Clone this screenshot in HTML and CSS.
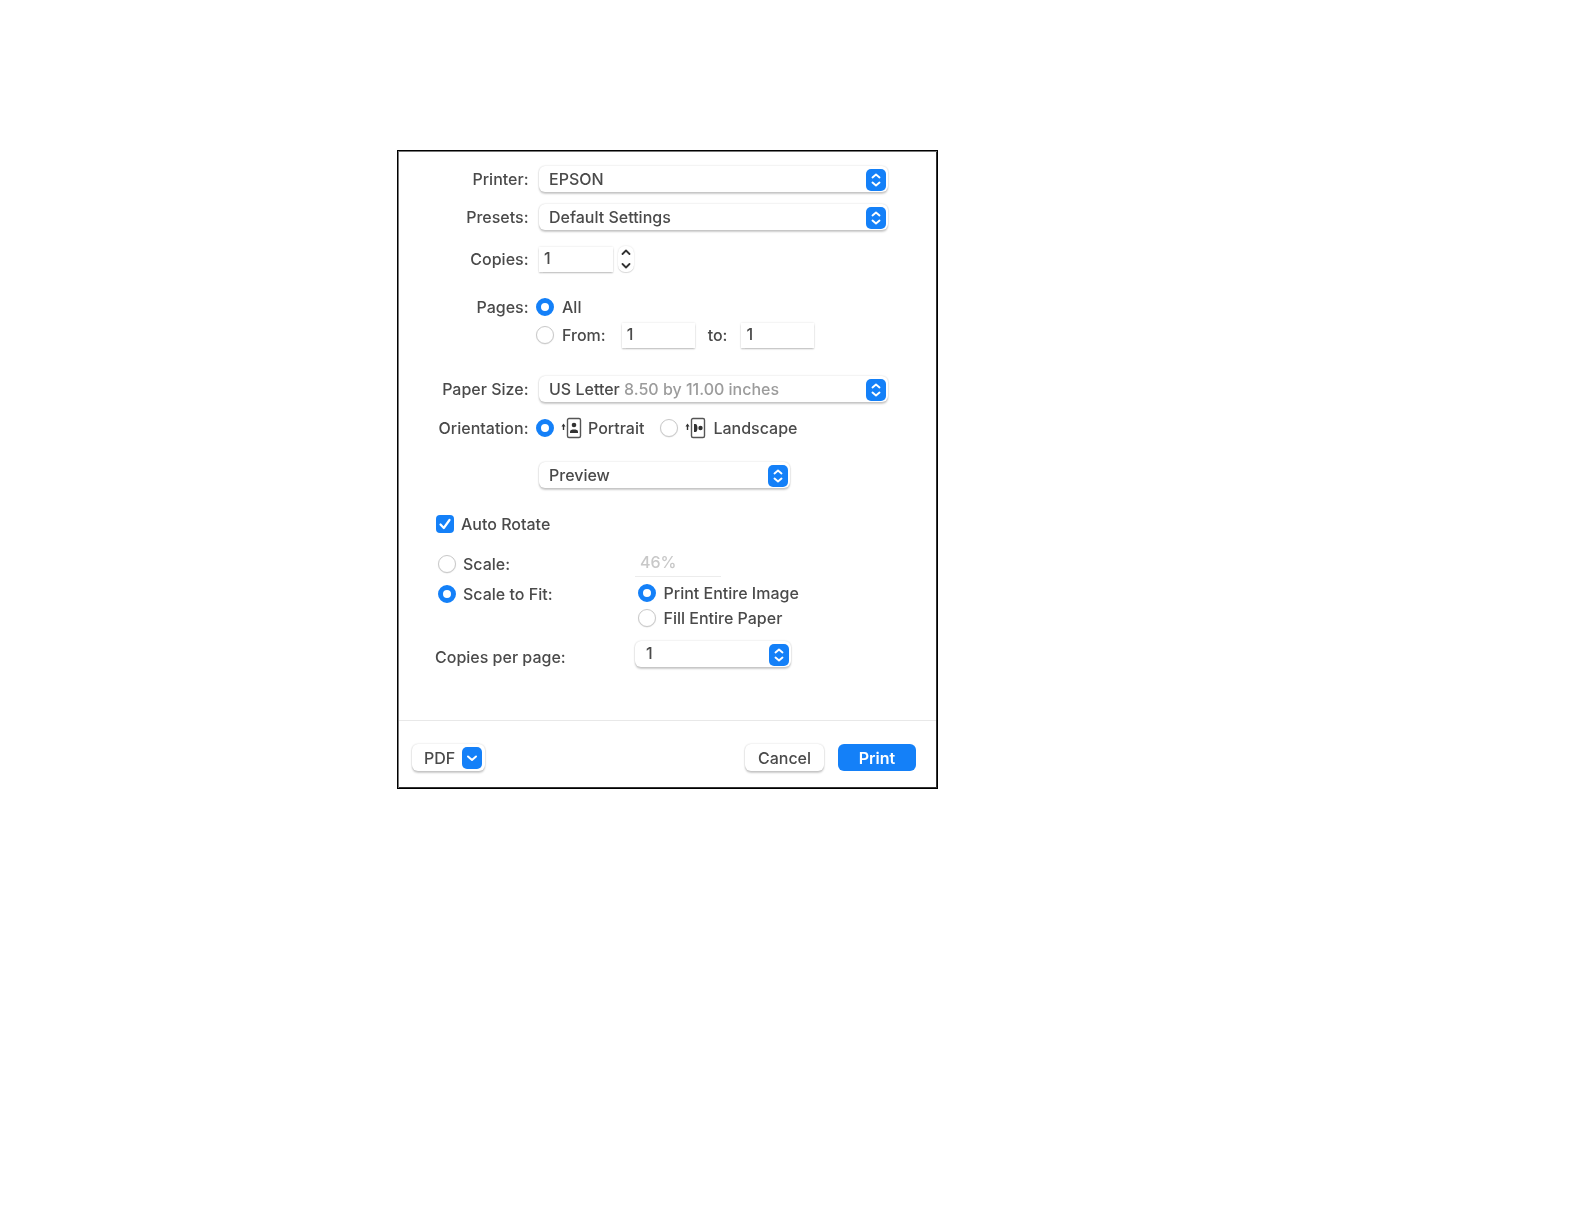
FILE: index.html
```html
<!DOCTYPE html>
<html lang="en">
<head>
<meta charset="utf-8">
<title>Print</title>
<link rel="stylesheet" href="styles.css">
</head>
<body>
<svg class="defs" width="0" height="0" aria-hidden="true">
  <symbol id="updown" viewBox="0 0 20 22"><path d="M6.500 8.500 10 5.500l3.500 3M6.500 13.500 10 16.500l3.500-3" fill="none" stroke="#fff" stroke-width="1.900" stroke-linecap="round" stroke-linejoin="round"/></symbol>
</svg>
<main class="dialog">
  <section class="form">
    <div class="row"><span class="label">Printer:</span>
      <div class="select wide"><span class="value">EPSON</span><span class="caret"><svg><use href="#updown"/></svg></span></div></div>
    <div class="row m12"><span class="label">Presets:</span>
      <div class="select wide"><span class="value">Default Settings</span><span class="caret"><svg><use href="#updown"/></svg></span></div></div>
    <div class="row m16"><span class="label">Copies:</span>
      <div class="field copies">1</div>
      <div class="stepper"><svg viewBox="0 0 16 26" width="16" height="26"><path d="M4.500 8 8 4.500 11.500 8M4.500 18 8 21.500 11.500 18" fill="none" stroke="#333" stroke-width="1.800" stroke-linecap="round" stroke-linejoin="round"/></svg></div></div>
    <div class="row m22"><span class="label">Pages:</span>
      <span class="radio on"></span><span class="opt">All</span></div>
    <div class="row m2"><span class="label"></span>
      <span class="radio"></span><span class="opt">From:</span>
      <div class="field range from">1</div><span class="to">to:</span><div class="field range">1</div></div>
    <div class="row m28"><span class="label">Paper Size:</span>
      <div class="select wide"><span class="value">US Letter <span class="dim">8.50 by 11.00 inches</span></span><span class="caret"><svg><use href="#updown"/></svg></span></div></div>
    <div class="row m13"><span class="label">Orientation:</span>
      <span class="radio on"></span>
      <svg class="orient" viewBox="0 0 28 22" width="28" height="22"><path d="M5.500 13V8" stroke="#333" stroke-width="1.400" fill="none"/><path d="M3.500 9.500h4L5.500 6.500z" fill="#333"/><rect x="9.500" y="1.500" width="13" height="19" rx="1.500" fill="#fff" stroke="#555" stroke-width="1.400"/><circle cx="16" cy="8" r="2.300" fill="#333"/><path d="M12 16v-1.500c0-2.600 8-2.600 8 0V16z" fill="#333"/></svg>
      <span class="opt">Portrait</span>
      <span class="radio second"></span>
      <svg class="orient" viewBox="0 0 28 22" width="28" height="22"><path d="M5.500 13V8" stroke="#333" stroke-width="1.400" fill="none"/><path d="M3.500 9.500h4L5.500 6.500z" fill="#333"/><rect x="9.500" y="1.500" width="13" height="19" rx="1.500" fill="#fff" stroke="#555" stroke-width="1.400"/><path d="M12 7h1.500c2.600 0 2.600 8 0 8H12z" fill="#333"/><circle cx="18.500" cy="11" r="2.200" fill="#333"/></svg>
      <span class="opt">Landscape</span></div>
    <div class="row m21"><span class="label"></span>
      <div class="select mid"><span class="value">Preview</span><span class="caret"><svg><use href="#updown"/></svg></span></div></div>
    <div class="lower">
      <div class="row"><span class="check"><svg viewBox="0 0 18 18" width="18" height="18"><path d="M4.500 9.500 7.800 13l5.700-8" fill="none" stroke="#fff" stroke-width="2.200" stroke-linecap="round" stroke-linejoin="round"/></svg></span><span class="opt">Auto Rotate</span></div>
      <div class="scale-grid">
        <div class="cell indent"><span class="radio"></span><span class="opt">Scale:</span></div>
        <div class="cell"><div class="percent">46%</div></div>
        <div class="cell indent top"><span class="radio on"></span><span class="opt">Scale to Fit:</span></div>
        <div class="stack">
          <div class="cell short"><span class="radio on"></span><span class="opt">Print Entire Image</span></div>
          <div class="cell short"><span class="radio"></span><span class="opt">Fill Entire Paper</span></div>
        </div>
        <div class="cell per"><span>Copies per page:</span></div>
        <div class="cell per-select"><div class="select small"><span class="value">1</span><span class="caret"><svg><use href="#updown"/></svg></span></div></div>
      </div>
    </div>
  </section>
  <footer class="footer">
    <div class="btn pdf"><span>PDF</span><span class="caret drop"><svg viewBox="0 0 20 20" width="20" height="20"><path d="M6 8.500 10 12l4-3.500" fill="none" stroke="#fff" stroke-width="2" stroke-linecap="round" stroke-linejoin="round"/></svg></span></div>
    <div class="actions">
      <div class="btn cancel">Cancel</div>
      <div class="btn print">Print</div>
    </div>
  </footer>
</main>
</body>
</html>
```
FILE: styles.css
```css
* { box-sizing: border-box; }
html, body { margin: 0; background: #fff; }
body {
  padding: 150px 0 0 397px;
  height: 1224px;
  font-family: Inter, "Liberation Sans", sans-serif;
  font-size: 16px;
  font-weight: 500;
  color: #4a4a4a;
  overflow: hidden;
}
.defs { display: block; height: 0; }
.dialog {
  width: 541px;
  height: 639px;
  border: 1px solid #000;
  padding: 1px;
  box-shadow: inset 1px 1px 0 #777, inset -1px -1px 0 #333;
  display: flex;
  flex-direction: column;
  background: #fff;
}
.form { flex: 1; padding-top: 14px; filter: blur(0.6px); }
.row { display: flex; align-items: center; height: 26px; }
.m2 { margin-top: 2px; }
.m12 { margin-top: 12px; }
.m13 { margin-top: 13px; }
.m16 { margin-top: 16px; }
.m21 { margin-top: 21px; }
.m22 { margin-top: 22px; }
.m28 { margin-top: 28px; }
.label { width: 129.500px; margin-right: 7.500px; text-align: right; flex: none; }
.select {
  display: flex;
  align-items: center;
  justify-content: space-between;
  height: 26px;
  padding: 1px 2px 0 10px;
  background: #fff;
  border-radius: 6px;
  box-shadow: 0 0 2px rgba(0,0,0,.16), 0 1.500px 2px rgba(0,0,0,.2);
}
.value { margin-top: -2px; }
.wide { width: 349px; margin-left: 3px; }
.mid { width: 251px; margin-left: 3px; }
.small { width: 156px; padding-left: 11px; }
.small .value { margin-top: -4px; }
.caret {
  width: 20px;
  height: 22px;
  border-radius: 5px;
  background: #1480f8;
  display: block;
  flex: none;
}
.caret svg { display: block; width: 20px; height: 22px; }
.field {
  height: 25px;
  padding: 0 5px;
  line-height: 23px;
  background: #fff;
  box-shadow: 0 0 2px rgba(0,0,0,.12), 0 1.500px 1.500px rgba(0,0,0,.18);
}
.copies { width: 74px; margin-left: 3px; }
.stepper {
  width: 16px;
  height: 26px;
  margin-left: 5px;
  border-radius: 7px;
  box-shadow: 0 0 2px rgba(0,0,0,.14), 0 1px 1px rgba(0,0,0,.12);
}
.stepper svg { display: block; }
.radio {
  width: 18px;
  height: 18px;
  flex: none;
  border-radius: 50%;
  background: #fff;
  border: 1px solid #c8c8c8;
  box-shadow: 0 .5px 1px rgba(0,0,0,.12);
}
.radio.on { border: 5px solid #1480f8; box-shadow: none; }
.radio.second { margin-left: 16px; }
.opt { margin-left: 8px; }
.orient { flex: none; margin-left: 4px; margin-right: -6px; }
.orient + .opt + .radio + .orient + .opt { margin-left: 9px; }
.range { width: 73px; }
.from { margin-left: 16px; }
.to { margin: 0 14px 0 13px; }
.dim { color: #9c9c9c; }
.lower { margin-top: 23px; padding-left: 37px; }
.lower .opt { margin-left: 7px; }
.check {
  width: 18px;
  height: 18px;
  border-radius: 4px;
  background: #1480f8;
  flex: none;
  display: block;
}
.check svg { display: block; }
.scale-grid {
  display: grid;
  grid-template-columns: 199px 1fr;
  margin-top: 14px;
}
.cell { display: flex; align-items: center; height: 26px; }
.indent { padding-left: 2px; }
.top { margin-top: 4px; }
.stack { margin-top: 3px; }
.short { height: 25px; }
.stack .radio { margin-left: 3px; }
.stack .opt { margin-left: 7.500px; }
.percent {
  width: 86px;
  height: 26px;
  padding-left: 5px;
  line-height: 22px;
  color: #c8c8c8;
  border-bottom: 1px solid #ececec;
}
.per { margin-top: 11px; padding-top: 5px; margin-left: -1px; }
.per-select { margin-top: 11px; }
.footer {
  height: 67px;
  border-top: 1px solid #e8e8e8;
  padding: 23px 20px 0 13px;
  display: flex;
  justify-content: space-between;
  align-items: flex-start;
  filter: blur(0.6px);
}
.actions { display: flex; gap: 14px; }
.btn {
  height: 27px;
  border-radius: 6px;
  background: #fff;
  display: flex;
  align-items: center;
  justify-content: center;
  box-shadow: 0 0 2px rgba(0,0,0,.16), 0 1.500px 2px rgba(0,0,0,.2);
}
.pdf { width: 73px; padding: 0 3px 0 12px; justify-content: space-between; }
.drop { width: 20px; height: 22px; }
.cancel { width: 79px; }
.print { width: 78px; background: #1480f8; color: #fff; box-shadow: none; font-weight: 600; }
```
